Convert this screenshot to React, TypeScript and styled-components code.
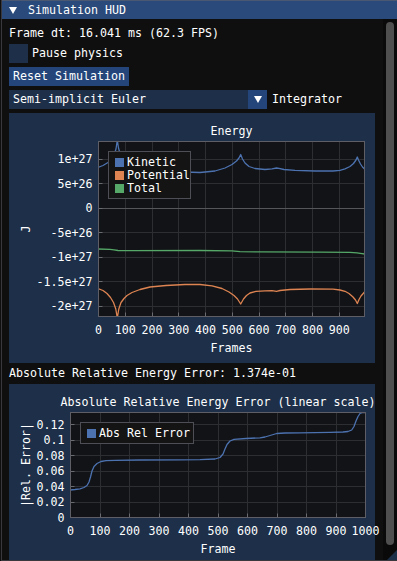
import { createGlobalStyle, styled } from 'styled-components';

type Pt = [number, number];
type Tick = { at: number; label: string };
type Series = { name: string; color: string; pts: Pt[] };
type Area = { l: number; t: number; r: number; b: number };

const GlobalStyle = createGlobalStyle`
  html, body {
    margin: 0;
    background: #0f0f0f;
    overflow: hidden;
  }
  body {
    font-family: 'DejaVu Sans Mono', 'Liberation Mono', monospace;
    font-size: 11.63px;
    line-height: 13px;
    color: #ffffff;
  }
`;

const Window = styled.div`
  position: relative;
  box-sizing: border-box;
  width: 396px;
  height: 561px;
  margin-left: 1px;
  border-left: 1px solid #38383d;
  border-bottom: 1px solid #38383d;
  background: #0f0f0f;
  display: flex;
  flex-direction: column;
  overflow: hidden;
`;

const TitleBar = styled.div`
  flex: none;
  box-sizing: border-box;
  height: 19px;
  border-top: 1px solid #4a5872;
  background: #294a7a;
  display: flex;
  align-items: center;
  gap: 11px;
  padding-left: 7px;
`;

const Triangle = styled.span<{ $w: number; $h: number }>`
  width: 0;
  height: 0;
  border-left: ${(p) => p.$w / 2}px solid transparent;
  border-right: ${(p) => p.$w / 2}px solid transparent;
  border-top: ${(p) => p.$h}px solid #ffffff;
`;

const Main = styled.div`
  flex: 1;
  min-height: 0;
  display: flex;
`;

const Content = styled.div`
  flex: 1;
  min-width: 0;
  padding: 8px 8px 0 7px;
  display: flex;
  flex-direction: column;
  align-items: flex-start;
  gap: 4px;
  overflow: hidden;

  & > * {
    flex: none;
  }
`;

const Scrollbar = styled.div`
  flex: none;
  width: 14px;
  box-sizing: border-box;
  padding: 3px 3px 0 3px;
  background: #0a0a0a;
`;

const ScrollGrab = styled.div`
  height: 523px;
  border-radius: 4px;
  background: #4f4f4f;
`;

const Line = styled.div`
  height: 13px;
  white-space: pre;
`;

const CheckRow = styled.label`
  display: flex;
  align-items: center;
  gap: 4px;
  height: 19px;
`;

const CheckBox = styled.span`
  width: 19px;
  height: 19px;
  background: #1d2f49;
`;

const Button = styled.button`
  box-sizing: border-box;
  height: 19px;
  padding: 0 4px;
  border: none;
  background: #23457a;
  color: #ffffff;
  font: inherit;
  line-height: 13px;
  white-space: pre;
`;

const ComboRow = styled.div`
  display: flex;
  align-items: center;
  gap: 5px;
  height: 19px;
`;

const ComboBox = styled.div`
  width: 258px;
  height: 19px;
  display: flex;
  background: #1d2f49;
`;

const ComboValue = styled.span`
  flex: 1;
  padding-left: 4px;
  line-height: 19px;
`;

const ComboArrow = styled.span`
  width: 19px;
  height: 19px;
  display: grid;
  place-items: center;
  background: #23457a;
`;

const PlotFrame = styled.div`
  position: relative;
  width: 366px;
  height: 250px;
  background: #1d2f49;
`;

const Chart = styled.svg`
  display: block;
  overflow: visible;
  font-family: inherit;
  font-size: 11.63px;

  text {
    fill: #ffffff;
  }
`;

const Legend = styled.div<{ $x: number; $y: number; $pr: number }>`
  position: absolute;
  left: ${(p) => p.$x}px;
  top: ${(p) => p.$y}px;
  padding: 3.5px ${(p) => p.$pr}px 3.5px 6px;
  border: 1px solid #4e4e56;
  background: #141414;
  display: flex;
  flex-direction: column;
`;

const LegendRow = styled.div`
  display: flex;
  align-items: center;
  gap: 3px;
  height: 13px;
  white-space: pre;
`;

const Swatch = styled.span<{ $color: string }>`
  width: 9px;
  height: 9px;
  background: ${(p) => p.$color};
`;

const ResizeGrip = styled.div`
  position: absolute;
  right: 0;
  bottom: 0;
  width: 0;
  height: 0;
  border-left: 10px solid transparent;
  border-bottom: 10px solid #1c2f48;
`;

const BLUE = '#4c72b0';
const ORANGE = '#dd8452';
const GREEN = '#55a868';

const crisp = (v: number) => Math.round(v - 0.5) + 0.5;
const local = (pts: Pt[], ox: number, oy: number): Pt[] => pts.map(([x, y]) => [x - ox, y - oy]);

// traced from the running HUD, screen px
const kinetic: Pt[] = [
  [98, 167.5], [103, 165.5], [108, 162.5], [111.5, 159], [114, 155], [116, 149], [117.3, 140],
  [118.5, 148], [120, 153.5], [122.5, 158.5], [126, 162.5], [131, 165.5], [138, 168], [150, 170],
  [170, 171.5], [200, 172.5], [215, 171], [225, 168], [232, 164.5], [236.5, 161], [239, 158],
  [240.7, 154.5], [242.5, 159], [245, 163], [249, 166.5], [255, 168.5], [265, 169.5], [272, 168.8],
  [276.5, 168], [279, 168.3], [284, 169.5], [295, 170.3], [315, 171], [333, 171], [340, 170.3],
  [345, 168.8], [350, 166.5], [353.5, 163.5], [356, 160], [357.3, 157], [358.5, 160], [360.5, 164],
  [362.5, 167], [364.5, 169],
];

const potential: Pt[] = [
  [98, 288.5], [103, 290.5], [107, 293.5], [110.5, 297.5], [113.5, 302.5], [115.8, 309], [117.3, 318],
  [118.8, 309], [121, 302.5], [124, 298.5], [127, 295.5], [132, 292.5], [140, 289.5], [150, 287],
  [166, 285.5], [185, 284.5], [200, 284.5], [212, 285.8], [222, 288.5], [229, 292], [234, 295.5],
  [237.5, 299], [240.7, 304], [243.5, 299], [246.5, 295.5], [250, 293], [256, 291.3], [265, 290.8],
  [272, 290.7], [276.5, 291.3], [280, 290.5], [290, 289.5], [310, 289], [333, 289.2], [340, 290],
  [345, 291.3], [349, 293.5], [353, 297], [355.5, 300], [357.3, 303.5], [359, 299.5], [361, 296],
  [364.5, 292],
];

const total: Pt[] = [
  [98, 249], [110, 249.3], [114, 249.8], [118, 250.5], [133, 250.6], [200, 250.5], [232, 250.8],
  [240, 251.6], [260, 251.9], [320, 252.2], [350, 252.4], [357, 252.8], [362, 253.6], [364.5, 254],
];

const relError: Pt[] = [
  [70, 490], [75, 489.5], [80, 488.8], [84, 487.5], [87, 485.5], [89, 482], [90.5, 477], [92, 471],
  [94, 466.5], [97, 463.5], [101, 461.5], [106, 460.7], [115, 460.3], [140, 460], [180, 459.8],
  [200, 459.6], [215, 459], [220, 457.5], [223, 454], [225, 449], [227, 444.5], [230, 441],
  [234, 439.3], [246, 438.5], [260, 437.8], [265, 437], [270, 435.5], [276.7, 433.5], [285, 433],
  [300, 432.8], [330, 432.4], [343, 432], [348, 431.5], [351.7, 430], [354, 426.5], [356, 421],
  [358, 416.5], [360, 413.5], [362, 412.7], [365, 412.5],
];

const energyArea: Area = { l: 89.5, t: 28.5, r: 355.5, b: 203.5 };
const errorArea: Area = { l: 61.5, t: 28.5, r: 356.5, b: 133.5 };

const energyX: Tick[] = [0, 100, 200, 300, 400, 500, 600, 700, 800, 900].map((f) => ({
  at: 89.5 + f * 0.2675,
  label: String(f),
}));
const energyY: Tick[] = [
  [2, '1e+27'], [1, '5e+26'], [0, '0'], [-1, '-5e+26'], [-2, '-1e+27'], [-3, '-1.5e+27'], [-4, '-2e+27'],
].map(([k, label]) => ({ at: 95.3 - (k as number) * 24.5, label: label as string }));

const errorX: Tick[] = [0, 100, 200, 300, 400, 500, 600, 700, 800, 900, 1000].map((f) => ({
  at: 61.5 + f * 0.295,
  label: String(f),
}));
const errorY: Tick[] = [
  [0.12, '0.12'], [0.1, '0.1'], [0.08, '0.08'], [0.06, '0.06'], [0.04, '0.04'], [0.02, '0.02'], [0, '0'],
].map(([v, label]) => ({ at: 133.5 - (v as number) * 772.5, label: label as string }));

type PlotProps = {
  id: string;
  title: string;
  xLabel: string;
  yLabel: string;
  area: Area;
  xTicks: Tick[];
  yTicks: Tick[];
  series: Series[];
  zeroAt?: number;
  legendPad: number;
};

function Plot({ id, title, xLabel, yLabel, area, xTicks, yTicks, series, zeroAt, legendPad }: PlotProps) {
  const cx = (area.l + area.r) / 2;
  const cy = (area.t + area.b) / 2;
  return (
    <PlotFrame>
      <Chart width={366} height={250}>
        <defs>
          <clipPath id={id}>
            <rect x={area.l} y={area.t} width={area.r - area.l} height={area.b - area.t} />
          </clipPath>
        </defs>
        <text x={cx} y={21.5} textAnchor='middle'>{title}</text>
        <rect x={area.l} y={area.t} width={area.r - area.l} height={area.b - area.t} fill='#121316' />
        <g stroke='#2d2e32' strokeWidth={1}>
          {xTicks.map((t) => (
            <line key={t.label} x1={crisp(t.at)} x2={crisp(t.at)} y1={area.t} y2={area.b} />
          ))}
          {yTicks.map((t) => (
            <line key={t.label} x1={area.l} x2={area.r} y1={crisp(t.at)} y2={crisp(t.at)} />
          ))}
        </g>
        {zeroAt !== undefined && (
          <line x1={area.l} x2={area.r} y1={crisp(zeroAt)} y2={crisp(zeroAt)} stroke='#55565a' />
        )}
        <g clipPath={`url(#${id})`} fill='none' strokeWidth={1.3} strokeLinejoin='round'>
          {series.map((s) => (
            <polyline key={s.name} points={s.pts.map((p) => p.join(',')).join(' ')} stroke={s.color} />
          ))}
        </g>
        <g stroke='#6a6b70'>
          {xTicks.map((t) => (
            <line key={t.label} x1={crisp(t.at)} x2={crisp(t.at)} y1={area.b - 4} y2={area.b} />
          ))}
          {yTicks.map((t) => (
            <line key={t.label} x1={area.l} x2={area.l + 4} y1={crisp(t.at)} y2={crisp(t.at)} />
          ))}
        </g>
        <rect
          x={area.l}
          y={area.t}
          width={area.r - area.l}
          height={area.b - area.t}
          fill='none'
          stroke='#5e5f66'
        />
        {yTicks.map((t) => (
          <text key={t.label} x={area.l - 6} y={t.at + 4} textAnchor='end'>{t.label}</text>
        ))}
        {xTicks.map((t) => (
          <text key={t.label} x={t.at} y={area.b + 17} textAnchor='middle'>{t.label}</text>
        ))}
        <text x={cx} y={area.b + 35} textAnchor='middle'>{xLabel}</text>
        <text x={20.5} y={cy} textAnchor='middle' transform={`rotate(-90 20.5 ${cy})`}>{yLabel}</text>
      </Chart>
      <Legend $x={area.l + 9.5} $y={area.t + 9.5} $pr={legendPad}>
        {series.map((s) => (
          <LegendRow key={s.name}>
            <Swatch $color={s.color} />
            {s.name}
          </LegendRow>
        ))}
      </Legend>
    </PlotFrame>
  );
}

export default function App() {
  return (
    <>
      <GlobalStyle />
      <Window>
        <TitleBar>
          <Triangle $w={8} $h={7} />
          <span>Simulation HUD</span>
        </TitleBar>
        <Main>
          <Content>
            <Line>Frame dt: 16.041 ms (62.3 FPS)</Line>
            <CheckRow>
              <CheckBox />
              Pause physics
            </CheckRow>
            <Button>Reset Simulation</Button>
            <ComboRow>
              <ComboBox>
                <ComboValue>Semi-implicit Euler</ComboValue>
                <ComboArrow>
                  <Triangle $w={9} $h={7} />
                </ComboArrow>
              </ComboBox>
              Integrator
            </ComboRow>
            <Plot
              id='energy'
              title='Energy'
              xLabel='Frames'
              yLabel='J'
              area={energyArea}
              xTicks={energyX}
              yTicks={energyY}
              zeroAt={95.3}
              legendPad={0}
              series={[
                { name: 'Kinetic', color: BLUE, pts: local(kinetic, 9, 113) },
                { name: 'Potential', color: ORANGE, pts: local(potential, 9, 113) },
                { name: 'Total', color: GREEN, pts: local(total, 9, 113) },
              ]}
            />
            <Line>Absolute Relative Energy Error: 1.374e-01</Line>
            <Plot
              id='relerr'
              title='Absolute Relative Energy Error (linear scale)'
              xLabel='Frame'
              yLabel='|Rel. Error|'
              area={errorArea}
              xTicks={errorX}
              yTicks={errorY}
              legendPad={3}
              series={[{ name: 'Abs Rel Error', color: BLUE, pts: local(relError, 9, 384) }]}
            />
          </Content>
          <Scrollbar>
            <ScrollGrab />
          </Scrollbar>
        </Main>
        <ResizeGrip />
      </Window>
    </>
  );
}
